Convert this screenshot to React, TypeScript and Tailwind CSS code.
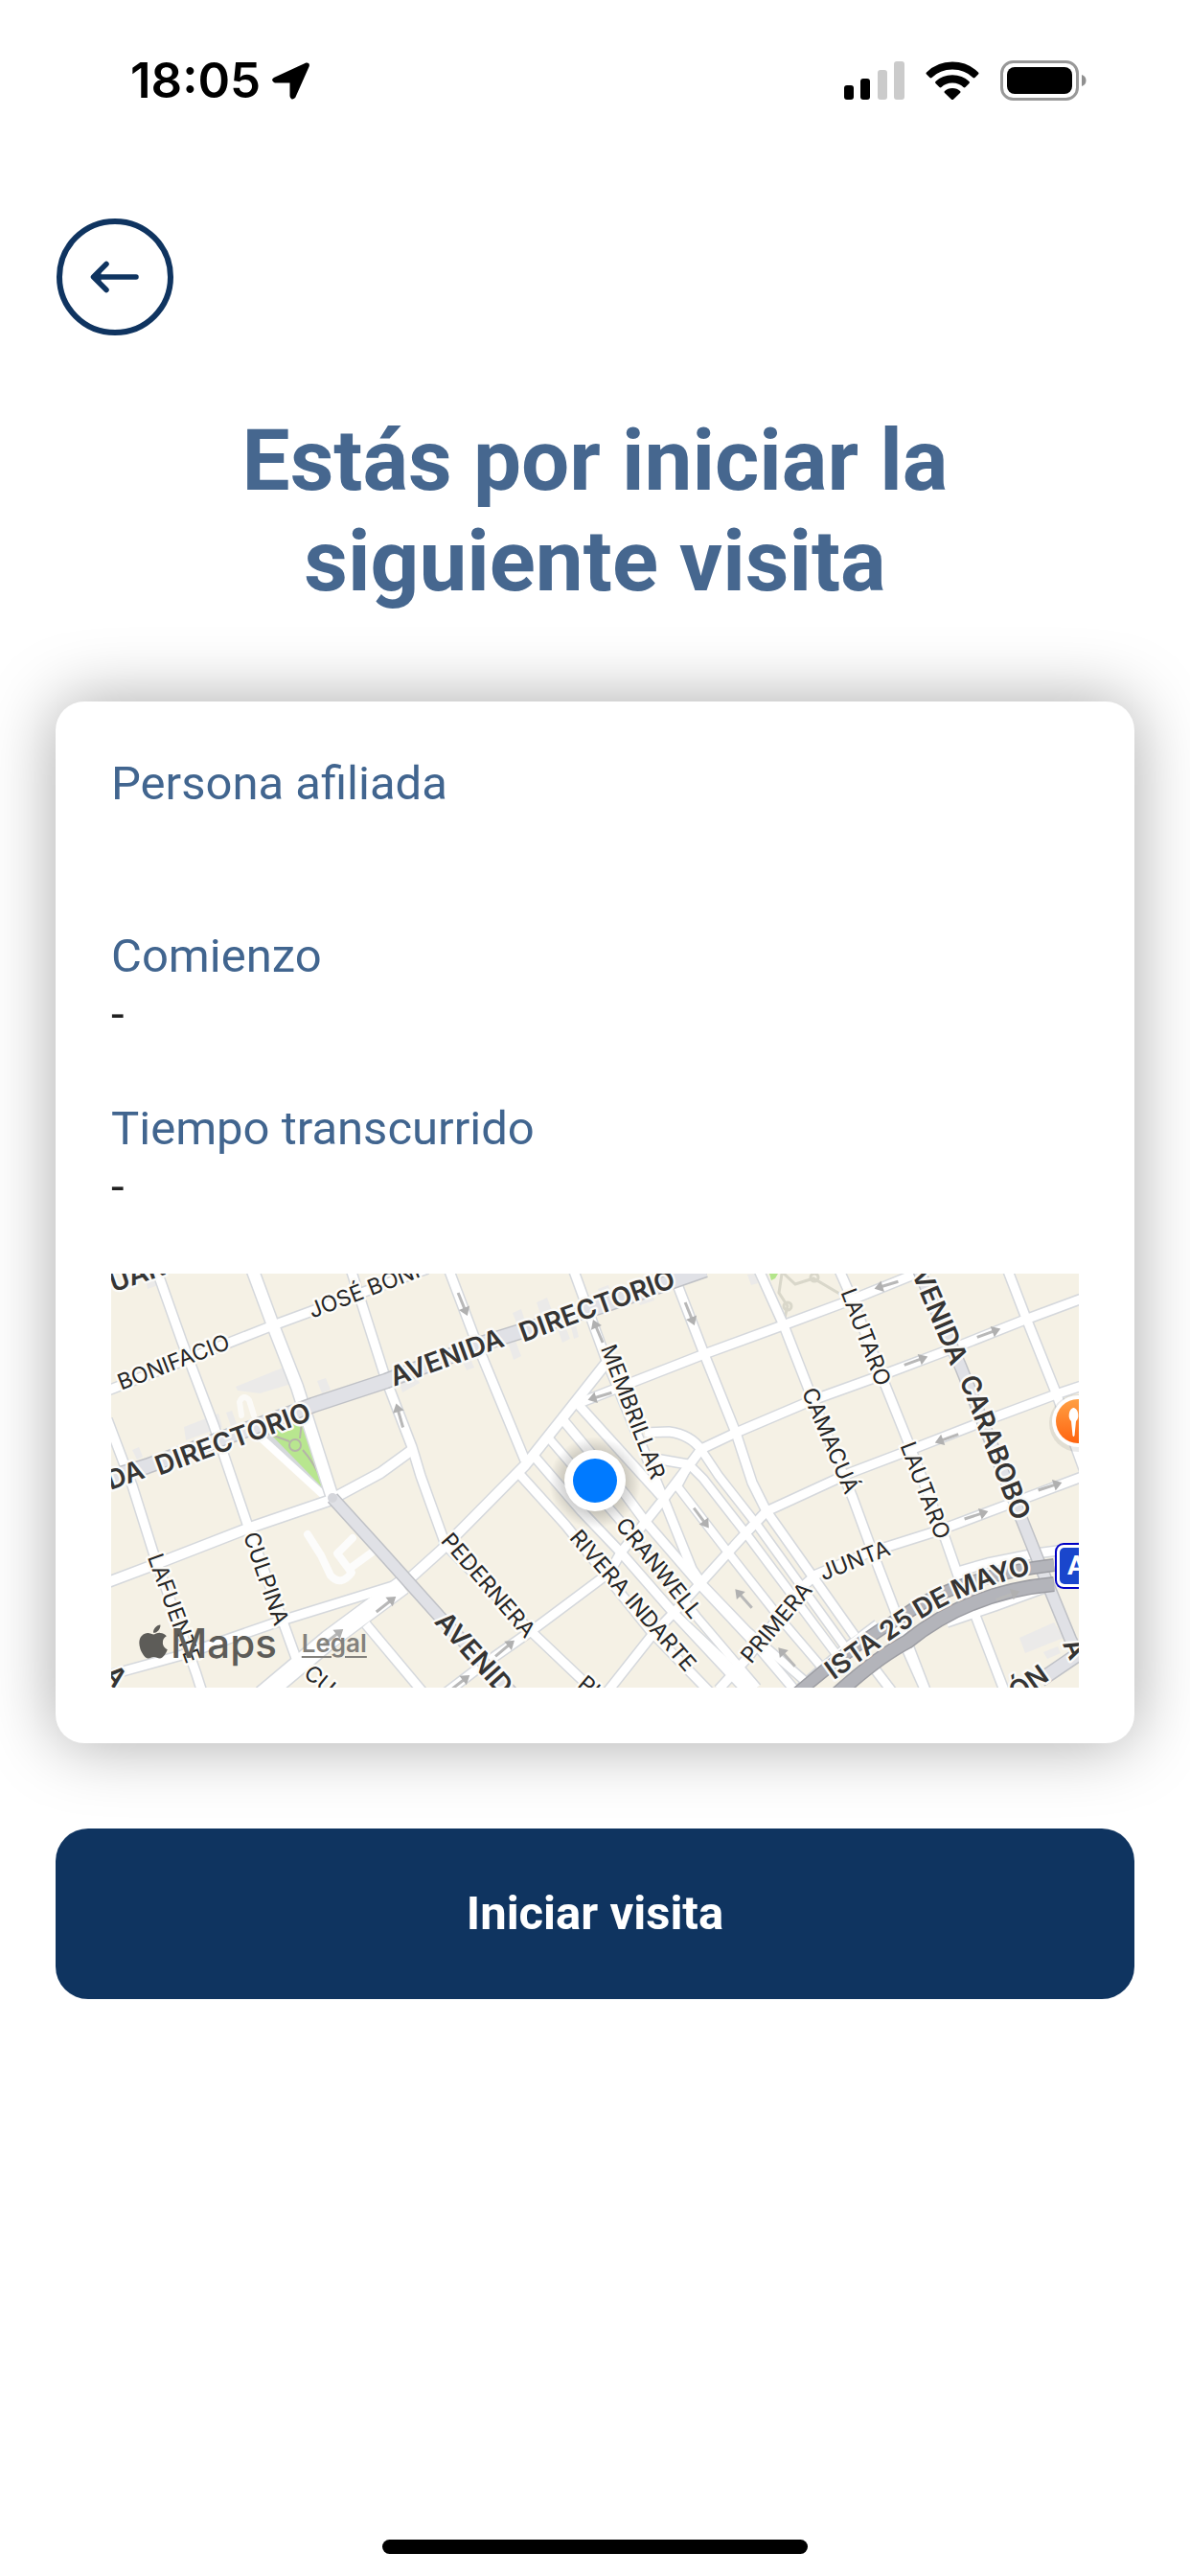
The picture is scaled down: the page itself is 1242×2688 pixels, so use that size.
import { FaApple } from "react-icons/fa";

type Road = { d: string; w: number };

const STREETS: Road[] = [
  { d: "M-4 152 L22 221 L44 291 L89 418 L96 440", w: 9 },
  { d: "M46 -8 L74 71 L107 158 L142 261 L181 368 L194 404", w: 9 },
  { d: "M146 -8 L169 54 L194 118 L231 234", w: 12 },
  { d: "M249 -8 L287 111 L314 181 L323 211 L349 283", w: 9 },
  { d: "M349 283 L439 374 L500 432 L508 440", w: 9 },
  { d: "M351 -8 L382 74 L432 195", w: 9 },
  { d: "M481 -8 L516 88 L577 236 L606 308 L616 323", w: 9 },
  { d: "M585 -4 L619 84 L652 166 L669 218 L684 248 L776 378", w: 9 },
  { d: "M674 -8 L702 54 L732 131 L774 234 L796 294 L819 354 L852 440", w: 9 },
  { d: "M758 -8 L774 28 L807 114 L834 181 L871 278 L886 321 L901 354 L934 440", w: 9 },
  { d: "M934 -8 L954 44 L986 124 L1018 212", w: 9 },
  { d: "M-6 123 L169 54 L294 8 L330 -5", w: 9 },
  { d: "M491 134 L619 84 L701 54 L771 28 L860 -8", w: 9 },
  { d: "M616 183 L652 166 L732 132 L807 105 L881 77 L954 48 L1016 25", w: 9 },
  { d: "M664 269 L684 248 L771 208 L834 184 L911 154 L986 126 L1016 116", w: 9 },
  { d: "M634 434 L664 401 L697 358 L720 328 L736 314 L791 291 L864 268 L944 238 L1016 211", w: 9 },
  { d: "M-6 323 L47 303 L142 266 L227 237 L281 208 L314 184", w: 10 },
  { d: "M-6 420 L74 398 L181 361 L304 323", w: 9 },
  { d: "M304 325 L344 289 L432 200 L471 151 L516 94", w: 10 },
  { d: "M158 440 L227 382 L304 325", w: 19 },
  { d: "M266 366 L328 440", w: 9 },
  { d: "M346 440 L384 411 L441 371 L520 312 L532 291 L576 236 L601 203 L616 183", w: 9 },
  { d: "M515 440 L564 378 L587 354 L616 322 L644 291 L664 269 L684 248", w: 9 },
  { d: "M426 209 L474 262 L511 308 L564 374 L628 440", w: 9 },
  { d: "M441 190 L491 248 L532 291 L587 354 L660 432", w: 9 },
  { d: "M457 172 L534 261 L611 358 L674 432", w: 8 },
  { d: "M472 153 L537 231 L557 258 L614 324 L674 388 L718 440", w: 9 },
  { d: "M487 136 L574 232", w: 9 },
  { d: "M601 203 L591 222 L644 291 L700 362 L741 410", w: 8 },
  { d: "M604 200 L618 214 L664 273 L756 396", w: 8 },
  { d: "M616 184 L634 211 L674 262 L765 388", w: 8 },
  { d: "M616 323 L664 373 L732 432", w: 8 },
  { d: "M587 354 L640 404 L672 440", w: 8 },
  { d: "M557 166 L582 165 Q605 168 616 184", w: 9 },
  { d: "M562 192 L602 199", w: 9 },
  { d: "M819 366 L852 440", w: 9 },
  { d: "M795 410 L818 440", w: 9 },
  { d: "M720 432 L764 393 L800 366", w: 9 },
  { d: "M880 312 L915 302 L965 292 L1011 286", w: 9 },
  { d: "M872 364 L922 347 L985 324", w: 9 },
];

const AVENUES: Road[] = [
  { d: "M-6 214 L37 201 L127 168 L211 137 L287 112 L387 73 L511 34 L620 -4", w: 14 },
  { d: "M841 -8 L887 98 L951 258 L971 308 L1001 381 L1011 402", w: 11 },
  { d: "M231 234 L281 289 L342 357 L421 440", w: 11 },
  { d: "M970 424 L1014 394", w: 13 },
];

const HIGHWAY: Road[] = [
  { d: "M716 438 Q770 390 831 354 Q885 316 984 304", w: 11 },
  { d: "M756 440 Q800 400 831 384 Q895 332 984 324", w: 13 },
];

const ARROWS: [number, number, number][] = [
  [301, 148, -106],
  [367, 32, 68],
  [508, 60, -113],
  [604, 42, 68],
  [510, 128, 163],
  [809, 12, 163],
  [840, 91, -20],
  [916, 62, -20],
  [872, 172, 160],
  [903, 252, -18],
  [980, 222, -18],
  [616, 255, 53],
  [660, 339, -132],
  [705, 400, -132],
  [936, 336, -20],
  [287, 345, -38],
  [232, 379, -38],
  [411, 391, -40],
  [364, 427, -38],
];

const BUILDINGS = [
  "130,118 182,97 188,115 155,125 132,122",
  "76,160 112,146 116,160 78,174",
  "215,112 224,109 229,121 220,125",
  "120,145 126,143 131,157 125,159",
  "22,184 29,181 33,191 27,194",
  "36,4 46,1 49,12 38,16",
  "419,41 428,37 434,56 426,59",
  "414,72 422,70 428,86 420,90",
  "444,30 455,25 462,44 450,49",
  "508,16 519,12 525,28 515,33",
  "548,24 564,17 567,28 552,33",
  "466,58 474,55 479,68 471,72",
  "480,56 485,54 488,66 483,68",
  "300,112 316,104 322,114 304,124",
  "366,90 374,87 379,98 371,101",
  "948,380 984,364 994,380 954,396",
  "973,395 988,389 991,396 977,402",
  "664,1 672,0 675,10 668,12",
];

type Label = { t: string; x: number; y: number; r: number; a?: "start" | "middle" | "end" };

const MINOR: Label[] = [
  { t: "BONIFACIO", x: 65, y: 92, r: -21 },
  { t: "JOSÉ BONI", x: 207, y: 39, r: -21, a: "start" },
  { t: "MEMBRILLAR", x: 545, y: 144, r: 69 },
  { t: "LAUTARO", x: 788, y: 66, r: 69 },
  { t: "LAUTARO", x: 850, y: 226, r: 69 },
  { t: "CAMACUÁ", x: 751, y: 174, r: 67 },
  { t: "CULPINA", x: 162, y: 318, r: 71 },
  { t: "LAFUENTE", x: 66, y: 349, r: 70 },
  { t: "PEDERNERA", x: 394, y: 325, r: 49 },
  { t: "RIVERA INDARTE", x: 545, y: 341, r: 49 },
  { t: "CRANWELL", x: 572, y: 307, r: 51 },
  { t: "PRIMERA", x: 694, y: 364, r: -50 },
  { t: "JUNTA", x: 776, y: 299, r: -21 },
  { t: "CU", x: 205, y: 413, r: 40, a: "start" },
  { t: "PI", x: 491, y: 424, r: 40, a: "start" },
];

const MAJOR: Label[] = [
  { t: "UAR", x: -1, y: 10, r: -19, a: "start" },
  { t: "DA", x: 33, y: 203, r: -20, a: "end" },
  { t: "DIRECTORIO", x: 127, y: 172, r: -20 },
  { t: "AVENIDA", x: 350, y: 87, r: -20 },
  { t: "DIRECTORIO", x: 507, y: 33, r: -20 },
  { t: "VENIDA", x: 886, y: 93, r: 67, a: "end" },
  { t: "CARABOBO", x: 923, y: 181, r: 69 },
  { t: "AVENID", x: 344, y: 357, r: 48, a: "start" },
  { t: "ÓN", x: 957, y: 427, r: -35 },
  { t: "A", x: 1002, y: 382, r: 66, a: "start" },
  { t: "A", x: -2, y: 412, r: 50, a: "start" },
];

function Roads({ roads, edge, fill }: { roads: Road[]; edge: string; fill: string }) {
  return (
    <g fill="none" strokeLinejoin="round">
      {roads.map((r) => (
        <path key={"e" + r.d} d={r.d} stroke={edge} strokeWidth={r.w + 3} />
      ))}
      {roads.map((r) => (
        <path key={"f" + r.d} d={r.d} stroke={fill} strokeWidth={r.w} />
      ))}
    </g>
  );
}

function Labels({ labels }: { labels: Label[] }) {
  return (
    <>
      {labels.map((l, i) => (
        <text key={i} transform={`translate(${l.x} ${l.y}) rotate(${l.r})`} textAnchor={l.a ?? "middle"} dy="0.36em">
          {l.t}
        </text>
      ))}
    </>
  );
}

function StreetMap() {
  return (
    <svg viewBox="0 0 1010 432" className="block w-full font-[Inter,sans-serif]" role="img" aria-label="Mapa de la visita">
      <defs>
        <radialGradient id="halo">
          <stop offset="0.6" stopColor="#000" stopOpacity="0.2" />
          <stop offset="1" stopColor="#000" stopOpacity="0" />
        </radialGradient>
        <linearGradient id="poi" x1="0" y1="0" x2="0" y2="1">
          <stop offset="0" stopColor="#ff9f43" />
          <stop offset="1" stopColor="#ff6410" />
        </linearGradient>
        <path id="autopista" d="M650 500 L732 428 Q790 386 837 354 Q890 320 958 304" />
      </defs>
      <rect width="1010" height="432" fill="#f5f1e5" />
      <g fill="#ebeae9">
        {BUILDINGS.map((p) => (
          <polygon key={p} points={p} />
        ))}
      </g>
      <polygon points="687,0 696,0 693,5 689,7" fill="#b3e58a" />
      <g fill="none" stroke="#d9d7ca" strokeWidth="3">
        <path d="M700 -2 L714 11 L733 5 L762 22 M700 0 L697 20 L706 34 L703 46" />
        <circle cx="734" cy="4" r="4" />
        <circle cx="706" cy="34" r="4" />
      </g>
      <g fill="none" stroke="#fcfcfb" strokeWidth="8" strokeLinecap="round" strokeLinejoin="round">
        <path d="M205 272 L219 294 L229 315 Q240 327 251 312 L236 292 L252 276 M250 307 L272 291" />
        <path d="M136 148 L134 134 Q138 125 144 132 L149 148" strokeWidth="6" opacity="0.8" />
      </g>
      <path d="M164 168 L231 234" stroke="#d5d8dc" strokeWidth="11" />
      <polygon points="163,164 200,152 229,232" fill="#b8e68f" />
      <g fill="none" stroke="#b5b4a8" strokeWidth="2">
        <path d="M164 167 L186 175 M199 154 L197 172 M200 184 Q214 200 222 222" />
        <circle cx="192" cy="179" r="6" />
      </g>
      <path d="M157 172 L229 238" stroke="#ffffff" strokeWidth="8" />
      <Roads roads={STREETS} edge="#d5d8dc" fill="#ffffff" />
      <Roads roads={AVENUES} edge="#bfc1c6" fill="#e0e1e6" />
      <circle cx="231" cy="234" r="5" fill="#d5d6db" />
      <Roads roads={HIGHWAY} edge="#9c9da3" fill="#b3b4ba" />

      {ARROWS.map(([x, y, r]) => (
        <g key={`${x}-${y}`} transform={`translate(${x} ${y}) rotate(${r})`}>
          <path d="M-13 0 H6" stroke="#b8b8b8" strokeWidth="3" />
          <path d="M4 -6 L13 0 L4 6 Z" fill="#b0b0b0" />
        </g>
      ))}

      <g fill="#252525" stroke="#fdfcf8" strokeWidth="5" strokeLinejoin="round" className="text-[23px] [paint-order:stroke]">
        <Labels labels={MINOR} />
      </g>
      <g fill="#353433" stroke="#fafaf8" strokeWidth="5" strokeLinejoin="round" className="text-[28px] font-semibold [paint-order:stroke]">
        <Labels labels={MAJOR} />
        <text textAnchor="end" dy="0.36em">
          <textPath href="#autopista" startOffset="100%">
            ISTA 25 DE MAYO
          </textPath>
        </text>
      </g>

      <circle cx="1009" cy="156" r="30" fill="#000" opacity="0.08" />
      <circle cx="1009" cy="154" r="27" fill="#fff" />
      <circle cx="1009" cy="154" r="23" fill="url(#poi)" />
      <path d="M1004 140 a6 8 0 0 0 -2 14 l1.500 15 q1 2 2 0 l1.500 -15 a6 8 0 0 0 -2 -14 z" fill="#fff" />

      <rect x="985" y="281" width="60" height="48" rx="9" fill="#0000c4" />
      <rect x="987" y="283" width="60" height="44" rx="7" fill="#fff" />
      <rect x="990" y="286" width="60" height="38" rx="5" fill="#1a46cc" />
      <text x="998" y="314" fill="#fff" className="text-[28px] font-bold font-[Roboto,sans-serif]">
        A
      </text>

      <circle cx="505" cy="218" r="48" fill="url(#halo)" />
      <circle cx="505" cy="216" r="32" fill="#fff" />
      <circle cx="505" cy="216" r="23" fill="#007aff" />
    </svg>
  );
}

function StatusBar() {
  return (
    <header className="flex h-[168px] items-center justify-between pl-[78px] pr-[50px]">
      <div className="flex items-center gap-3 text-black">
        <span className="font-[Inter,sans-serif] text-[51px] leading-[60px] font-semibold">18:05</span>
        <svg viewBox="0 0 40 40" className="h-10 w-10" aria-hidden="true">
          <path d="M3 18 L35.500 3 Q38 2.500 37.200 5 L23 37 Q20.500 39.500 20 36 V21 H3.500 Q0 19.500 3 18 Z" fill="#000" stroke="#000" strokeWidth="3" strokeLinejoin="round" />
        </svg>
      </div>
      <div className="flex items-center gap-[22px]">
        <svg viewBox="0 0 63 40" className="h-10 w-[63px]" aria-hidden="true">
          <rect x="0" y="25" width="10" height="15" rx="3" />
          <rect x="17" y="18" width="10" height="22" rx="3" />
          <rect x="35" y="9" width="10" height="31" rx="3" fill="#cbcbcb" />
          <rect x="52" y="0" width="11" height="40" rx="3" fill="#cbcbcb" />
        </svg>
        <svg viewBox="0 0 56 40" className="h-10 w-14" aria-hidden="true">
          <path d="M1 11.500 Q0 12.500 1 13.500 L4.500 17 Q5.500 17.800 6.500 17 Q15 8.500 28 8.500 T49.500 17 Q50.500 17.800 51.500 17 L55 13.500 Q56 12.500 55 11.500 Q44 0.500 28 0.500 T1 11.500 Z" />
          <path d="M10.500 21 Q9.500 22 10.500 23 L14.500 27 Q15.500 27.800 16.500 27 Q21 22.500 28 22.500 T39.500 27 Q40.500 27.800 41.500 27 L45.500 23 Q46.500 22 45.500 21 Q38.500 14.300 28 14.300 T10.500 21 Z" />
          <path d="M20 31 Q19 32 20 33 L27 39.700 Q28 40.500 29 39.700 L36 33 Q37 32 36 31 Q33 28 28 28 T20 31 Z" />
        </svg>
        <svg viewBox="0 0 90 42" className="h-[42px] w-[90px]" aria-hidden="true">
          <rect x="1.500" y="1.500" width="79" height="39" rx="12" fill="none" stroke="#989898" strokeWidth="3" />
          <rect x="7" y="7" width="68" height="28" rx="8" />
          <path d="M85 15 Q89.500 16.500 89.500 21 T85 27 Z" fill="#8f8f8f" />
        </svg>
      </div>
    </header>
  );
}

function Field({ label, value }: { label: string; value: string }) {
  return (
    <div className="flex flex-col gap-[2px] text-[49px]">
      <dt className="leading-[58px] text-[#41658f]">{label}</dt>
      <dd className="h-[60px] leading-[60px] text-[#202020]">{value}</dd>
    </div>
  );
}

export default function App() {
  return (
    <div className="flex min-h-screen flex-col bg-white px-[58px] font-[Roboto,sans-serif]">
      <StatusBar />
      <main className="flex flex-col pt-[60px]">
        <button type="button" aria-label="Volver" className="ml-px flex size-[122px] items-center justify-center rounded-full border-[6px] border-[#0f3460] text-[#0f3460]">
          <svg viewBox="0 0 52 34" className="h-[34px] w-[52px]" fill="none" stroke="currentColor" strokeWidth="5.500" strokeLinecap="round" strokeLinejoin="round" aria-hidden="true">
            <path d="M17 3.500 L3.500 17 L17 30.500 M5 17 H48" />
            <path d="M3.500 17 L10 13 V21 Z" fill="currentColor" strokeWidth="3" />
          </svg>
        </button>
        <h1 className="mx-auto mt-[78px] max-w-[840px] text-center text-[89px] leading-[105px] font-bold text-[#46678f]">
          Estás por iniciar la siguiente visita
        </h1>
        <section className="mt-[94px] rounded-[30px] bg-white px-[58px] pt-[57px] pb-[58px] shadow-[0_0_70px_rgba(0,0,0,0.34)]">
          <dl className="flex flex-col gap-[60px]">
            <Field label="Persona afiliada" value="" />
            <Field label="Comienzo" value="-" />
            <Field label="Tiempo transcurrido" value="-" />
          </dl>
          <div className="relative mt-[60px]">
            <StreetMap />
            <div className="absolute bottom-[21px] left-[29px] flex items-center font-[Inter,sans-serif] text-[#5d5c58]">
              <FaApple className="mr-[3px] mb-1 h-10 w-[30px]" aria-hidden="true" />
              <span className="text-[42px] leading-[50px] font-medium">Maps</span>
              <a href="#legal" className="ml-[26px] text-[26px] leading-[30px] font-semibold text-[#83817c] underline underline-offset-4">
                Legal
              </a>
            </div>
          </div>
        </section>
        <button type="button" className="mt-[89px] h-[178px] rounded-[34px] bg-[#0f3460] text-[49px] font-bold text-white">
          Iniciar visita
        </button>
      </main>
      <footer className="mt-auto flex justify-center pb-[23px]">
        <div className="h-[15px] w-[444px] rounded-full bg-black" />
      </footer>
    </div>
  );
}
